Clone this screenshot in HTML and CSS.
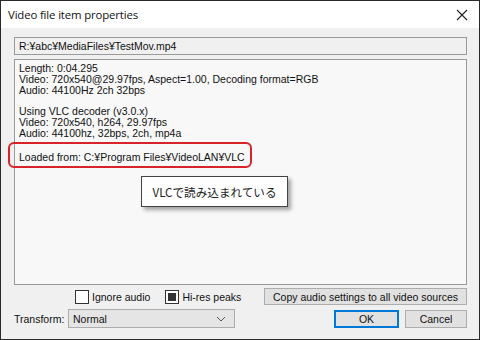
FILE: index.html
```html
<!DOCTYPE html>
<html>
<head>
<meta charset="utf-8">
<link rel="stylesheet" href="styles.css">
</head>
<body>
<div class="window">
  <div class="titlebar">
    <span class="title">Video file item properties</span>
    <svg class="close" width="12" height="12" viewBox="0 0 12 12"><path d="M1 1L11 11M11 1L1 11" stroke="#222" stroke-width="1.1" fill="none"/></svg>
  </div>
  <div class="content">
    <div class="path">R:¥abc¥MediaFiles¥TestMov.mp4</div>
    <div class="info">
      <div class="line">Length: 0:04.295</div>
      <div class="line">Video: 720x540@29.97fps, Aspect=1.00, Decoding format=RGB</div>
      <div class="line">Audio: 44100Hz 2ch 32bps</div>
      <div class="line gap">Using VLC decoder (v3.0.x)</div>
      <div class="line">Video: 720x540, h264, 29.97fps</div>
      <div class="line">Audio: 44100hz, 32bps, 2ch, mp4a</div>
      <div class="line loaded">Loaded from: C:¥Program Files¥VideoLAN¥VLC</div>
      <div class="highlight"></div>
      <div class="callout">VLCで読み込まれている</div>
    </div>
    <div class="row row1">
      <label class="check"><span class="box"></span>Ignore audio</label>
      <label class="check"><span class="box checked"><span class="fill"></span></span>Hi-res peaks</label>
      <button class="btn copy">Copy audio settings to all video sources</button>
    </div>
    <div class="row row2">
      <span class="tlabel">Transform:</span>
      <div class="select"><span>Normal</span><svg width="10" height="6" viewBox="0 0 10 6"><path d="M1 1L5 5L9 1" stroke="#555" stroke-width="1" fill="none"/></svg></div>
      <button class="btn ok">OK</button>
      <button class="btn cancel">Cancel</button>
    </div>
  </div>
</div>
</body>
</html>
```
FILE: styles.css
```css
* { box-sizing: border-box; }
html, body { margin: 0; padding: 0; }
body { width: 480px; height: 340px; background: #fff; font-family: "Liberation Sans", Arial, sans-serif; }
.window {
  width: 480px; height: 340px;
  border: 1px solid #2a2a2a;
  background: #f0f0f0;
  display: flex; flex-direction: column;
}
.titlebar {
  height: 27px; background: #fff;
  display: flex; align-items: center; justify-content: space-between;
  padding: 0 11px 0 7px;
}
.title { font-family: "Open Sans", "Noto Sans", sans-serif; font-size: 11.4px; color: #111; letter-spacing: -0.15px; }
.close { margin-top: 1px; }
.content { flex: 1; padding: 9px 12px 0 13px; display: flex; flex-direction: column; }
.path {
  height: 18px; border: 1px solid #9a9a9a; background: #f0f0f0;
  font-size: 10.5px; color: #111; padding: 2px 0 0 4px; line-height: 13px;
}
.info {
  position: relative;
  margin-top: 4px; height: 226px;
  border: 1px solid #9a9a9a; background: #f8f8f8;
  padding: 3px 0 0 4px;
  font-size: 10.5px; color: #111;
}
.line { line-height: 10.8px; white-space: nowrap; }
.gap { margin-top: 10.8px; }
.loaded { margin-top: 13px; }
.highlight {
  position: absolute; left: -7px; top: 82px;
  width: 244px; height: 26px;
  border: 2.5px solid #d8232a; border-radius: 6px;
}
.callout {
  position: absolute; left: 126px; top: 116px;
  width: 147px; height: 31px;
  background: #fff; border: 1px solid #444;
  box-shadow: 3px 3px 4px rgba(0,0,0,0.35);
  font-family: "Noto Sans CJK JP", "Noto Sans", sans-serif;
  font-size: 11.6px; color: #222;
  display: flex; align-items: center; justify-content: center;
}
.row { display: flex; align-items: center; }
.row1 { margin-top: 3px; height: 17px; }
.row2 { margin-top: 4px; height: 19px; }
.check { display: flex; align-items: center; font-size: 10.5px; color: #111; }
.check:first-of-type { margin-left: 61px; }
.check + .check { margin-left: 15px; }
.box {
  width: 14px; height: 14px; border: 1px solid #333; background: #fff;
  margin-right: 3px; display: flex; align-items: center; justify-content: center;
}
.fill { width: 8px; height: 8px; background: #333; }
.btn {
  font-family: "Liberation Sans", Arial, sans-serif; font-size: 10.5px; color: #111;
  background: #e1e1e1; border: 1px solid #adadad; padding: 0; margin: 0;
}
.copy { margin-left: auto; width: 203px; height: 17px; }
.tlabel { font-size: 10.5px; color: #111; width: 54px; }
.select {
  width: 167px; height: 19px; background: #e5e5e5; border: 1px solid #acacac;
  display: flex; align-items: center; justify-content: space-between;
  padding: 0 8px 0 4px; font-size: 10.5px; color: #111;
}
.ok { margin-left: auto; width: 65px; height: 18px; border: 1px solid #0078d7; box-shadow: inset 0 0 0 1px #0078d7; }
.cancel { margin-left: 6px; width: 62px; height: 18px; }
```
